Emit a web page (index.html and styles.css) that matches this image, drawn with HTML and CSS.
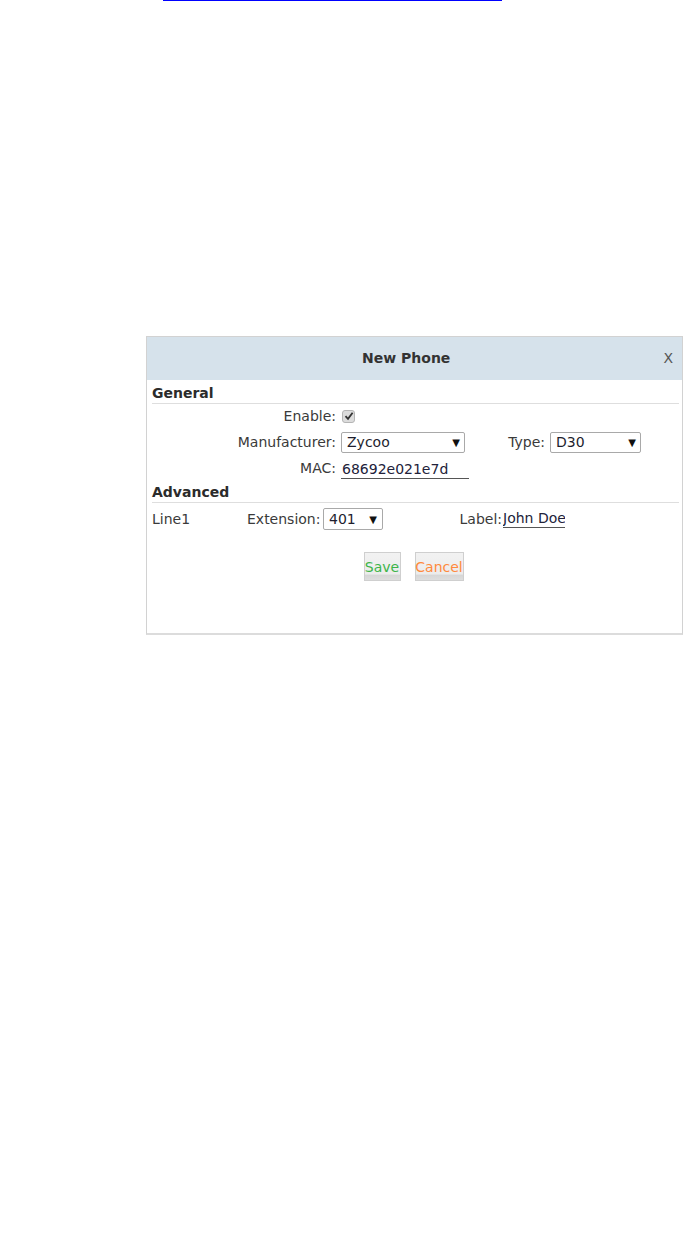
FILE: index.html
```html
<!DOCTYPE html>
<html>
<head>
<meta charset="utf-8">
<link rel="stylesheet" href="styles.css">
</head>
<body>
<div class="link-line"></div>
<div class="dialog">
  <div class="dialog-header">
    <div class="dialog-title">New Phone</div>
    <div class="dialog-close">X</div>
  </div>
  <div class="dialog-body">
    <div class="section-title">General</div>
    <div class="row row-enable">
      <div class="label">Enable:</div>
      <span class="checkbox"><svg width="10" height="10" viewBox="0 0 10 10"><path d="M1.5 5.2 L4 7.8 L8.6 1.8" fill="none" stroke="#333" stroke-width="1.8"/></svg></span>
    </div>
    <div class="row row-manu">
      <div class="label">Manufacturer:</div>
      <div class="select sel-manu"><span>Zycoo</span><span class="arrow">▼</span></div>
      <div class="type-label">Type:</div>
      <div class="select sel-type"><span>D30</span><span class="arrow">▼</span></div>
    </div>
    <div class="row row-mac">
      <div class="label">MAC:</div>
      <div class="text-input mac-input">68692e021e7d</div>
    </div>
    <div class="section-title section-adv">Advanced</div>
    <div class="row row-line">
      <div class="line-name">Line1</div>
      <div class="ext-label">Extension:</div>
      <div class="select sel-ext"><span>401</span><span class="arrow">▼</span></div>
      <div class="lbl-label">Label:</div>
      <div class="text-input lbl-input">John Doe</div>
    </div>
    <div class="buttons">
      <div class="btn btn-save">Save</div>
      <div class="btn btn-cancel">Cancel</div>
    </div>
  </div>
</div>
</body>
</html>
```
FILE: styles.css
```css
html, body {
  margin: 0;
  padding: 0;
  background: #ffffff;
}
body {
  font-family: "DejaVu Sans", Verdana, sans-serif;
  font-size: 14px;
  color: #3a3a3a;
}
.link-line {
  margin-left: 163px;
  width: 339px;
  height: 1px;
  background: #0000ff;
}
.dialog {
  margin: 335px 0 0 146px;
  width: 535px;
  height: 296px;
  border: 1px solid #d2d2d2;
  border-bottom: 2px solid #dcdcdc;
  background: #fff;
}
.dialog-header {
  height: 43px;
  background: #d6e2eb;
  display: flex;
  align-items: center;
  padding-right: 9px;
}
.dialog-title {
  flex: 1;
  text-align: center;
  font-weight: bold;
  color: #333;
  padding-left: 2px;
  padding-bottom: 2px;
}
.dialog-close {
  color: #555;
  font-size: 14px;
  padding-bottom: 2px;
}
.dialog-body {
  padding: 0 3px 0 5px;
}
.section-title {
  margin-top: 4px;
  line-height: 19px;
  font-weight: bold;
  color: #2b2b2b;
  border-bottom: 1px solid #dedede;
}
.section-adv {
  margin-top: 3px;
}
.row {
  display: flex;
  align-items: center;
}
.row-enable { height: 24px; }
.row-manu { height: 28px; }
.row-mac { height: 24px; }
.label {
  width: 184px;
  text-align: right;
  padding-right: 5px;
}
.checkbox {
  width: 13px;
  height: 13px;
  box-sizing: border-box;
  border: 1px solid #b5b5b5;
  border-radius: 3px;
  background: #dcdcdc;
  display: flex;
  align-items: center;
  justify-content: center;
  margin-left: 1px;
}
.select {
  height: 21px;
  box-sizing: border-box;
  border: 1px solid #a9a9a9;
  border-radius: 2px;
  display: flex;
  align-items: center;
  justify-content: space-between;
  padding: 0 4px 0 5px;
  color: #1e1e2e;
}
.arrow {
  font-size: 10px;
  color: #111;
}
.sel-manu { width: 124px; }
.type-label { width: 80px; text-align: right; padding-right: 5px; }
.sel-type { width: 91px; }
.text-input {
  color: #22223a;
  border-bottom: 1px solid #555;
  line-height: 18px;
  white-space: nowrap;
  overflow: hidden;
  padding-left: 1px;
}
.mac-input { width: 127px; margin-top: 2px; }
.row-line { height: 32px; }
.line-name { width: 95px; }
.ext-label { width: 76px; }
.sel-ext { width: 60px; height: 22px; padding-right: 5px; }
.lbl-label { width: 119px; text-align: right; padding-right: 1px; }
.lbl-input { width: 62px; padding-left: 0; margin-top: -2px; }
.buttons {
  display: flex;
  justify-content: center;
  gap: 14px;
  margin-top: 17px;
  padding-right: 4px;
}
.btn {
  height: 29px;
  box-sizing: border-box;
  border: 1px solid #cfcfcf;
  background: linear-gradient(#f2f2f2 0%, #ececec 78%, #d6d6d6 82%, #dedede 100%);
  display: flex;
  align-items: center;
  justify-content: center;
  padding: 0 1px;
}
.btn-save { width: 37px; color: #3db54a; }
.btn-cancel { width: 49px; color: #ff8a3d; }
```
